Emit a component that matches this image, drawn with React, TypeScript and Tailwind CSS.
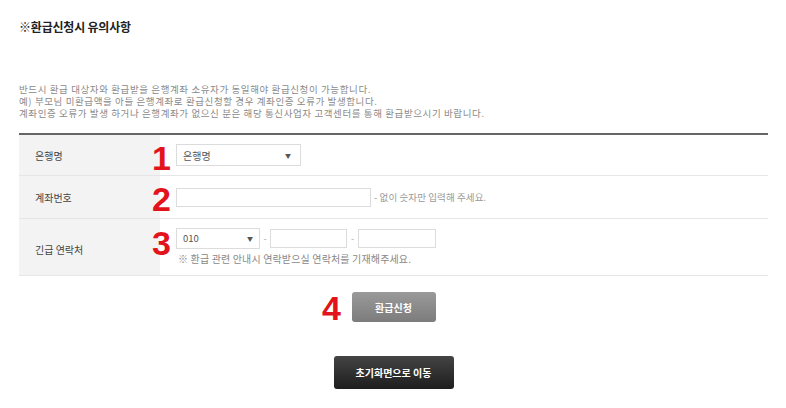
import React from "react";

const font = { fontFamily: '"Malgun Gothic", "Noto Sans CJK KR", "Noto Sans", sans-serif' };

const Mark = ({ n, className }: { n: string; className: string }) => (
  <span
    className={`absolute text-[34px] font-black leading-none text-[#e3131b] ${className}`}
    style={{ fontFamily: '"Liberation Sans", Arial, sans-serif' }}
  >
    {n}
  </span>
);

const Arrow = () => <span className="text-[6px] text-[#555]">▼</span>;

const App = () => {
  return (
    <div className="w-[786px] h-[408px] bg-white text-[#333] relative" style={font}>
      <div className="px-[19px] pt-[18px]">
        <h2 className="text-[12px] font-bold text-[#222] leading-[17px] tracking-[-0.2px]">※환급신청시 유의사항</h2>
        <div className="mt-[48px] text-[9.5px] leading-[12px] text-[#8a8a8a] tracking-[0.6px]">
          <p>반드시 환급 대상자와 환급받을 은행계좌 소유자가 동일해야 환급신청이 가능합니다.</p>
          <p>예) 부모님 미환급액을 아들 은행계좌로 환급신청할 경우 계좌인증 오류가 발생합니다.</p>
          <p>계좌인증 오류가 발생 하거나 은행계좌가 없으신 분은 해당 통신사업자 고객센터를 통해 환급받으시기 바랍니다.</p>
        </div>

        <div className="mt-[14px] w-[749px] border-t-2 border-[#666]">
          {/* row 1 */}
          <div className="flex h-[41px] border-b border-[#e6e6e6]">
            <div className="w-[141px] bg-[#f3f3f3] flex items-center pl-[16px] text-[10px] text-[#444]">은행명</div>
            <div className="relative flex-1 flex items-center pl-[16px]">
              <Mark n="1" className="left-[-8px] top-[6px]" />
              <div className="w-[125px] h-[22px] border border-[#dcdcdc] flex items-center justify-between pl-[6px] pr-[9px] text-[10px] text-[#555]">
                <span>은행명</span>
                <Arrow />
              </div>
            </div>
          </div>
          {/* row 2 */}
          <div className="flex h-[43px] border-b border-[#e6e6e6]">
            <div className="w-[141px] bg-[#f3f3f3] flex items-center pl-[16px] text-[10px] text-[#444]">계좌번호</div>
            <div className="relative flex-1 flex items-center pl-[16px]">
              <Mark n="2" className="left-[-8px] top-[6px]" />
              <div className="w-[195px] h-[19px] border border-[#dcdcdc]" />
              <span className="ml-[3px] text-[9.5px] text-[#999] tracking-[0.1px]">- 없이 숫자만 입력해 주세요.</span>
            </div>
          </div>
          {/* row 3 */}
          <div className="flex h-[57px] border-b border-[#e6e6e6]">
            <div className="w-[141px] bg-[#f3f3f3] flex items-center pl-[16px] pt-[4px] text-[10px] text-[#444]">긴급 연락처</div>
            <div className="relative flex-1 flex flex-col justify-center pl-[16px]">
              <Mark n="3" className="left-[-8px] top-[7px]" />
              <div className="flex items-center text-[9px] text-[#aaa]">
                <div className="w-[84px] h-[21px] border border-[#dcdcdc] flex items-center justify-between pl-[6px] pr-[6px] text-[9.5px] text-[#555]">
                  <span>010</span>
                  <Arrow />
                </div>
                <span className="w-[10px] text-center">-</span>
                <div className="w-[77px] h-[19px] border border-[#dcdcdc]" />
                <span className="w-[11px] text-center">-</span>
                <div className="w-[78px] h-[19px] border border-[#dcdcdc]" />
              </div>
              <p className="mt-[2px] pl-[2px] text-[10px] text-[#888] tracking-[0.15px]">※ 환급 관련 안내시 연락받으실 연락처를 기재해주세요.</p>
            </div>
          </div>
        </div>

        <div className="relative mt-[16px] flex justify-center w-[749px]">
          <Mark n="4" className="left-[303px] top-[-1px]" />
          <button className="w-[84px] h-[30px] rounded-[3px] bg-gradient-to-b from-[#9a9a9a] to-[#7c7c7c] text-white text-[10px] font-bold">
            환급신청
          </button>
        </div>

        <div className="mt-[34px] flex justify-center w-[749px]">
          <button className="w-[120px] h-[33px] rounded-[3px] bg-gradient-to-b from-[#444] to-[#1e1e1e] text-white text-[10px] font-bold">
            초기화면으로 이동
          </button>
        </div>
      </div>
    </div>
  );
};

export default App;
